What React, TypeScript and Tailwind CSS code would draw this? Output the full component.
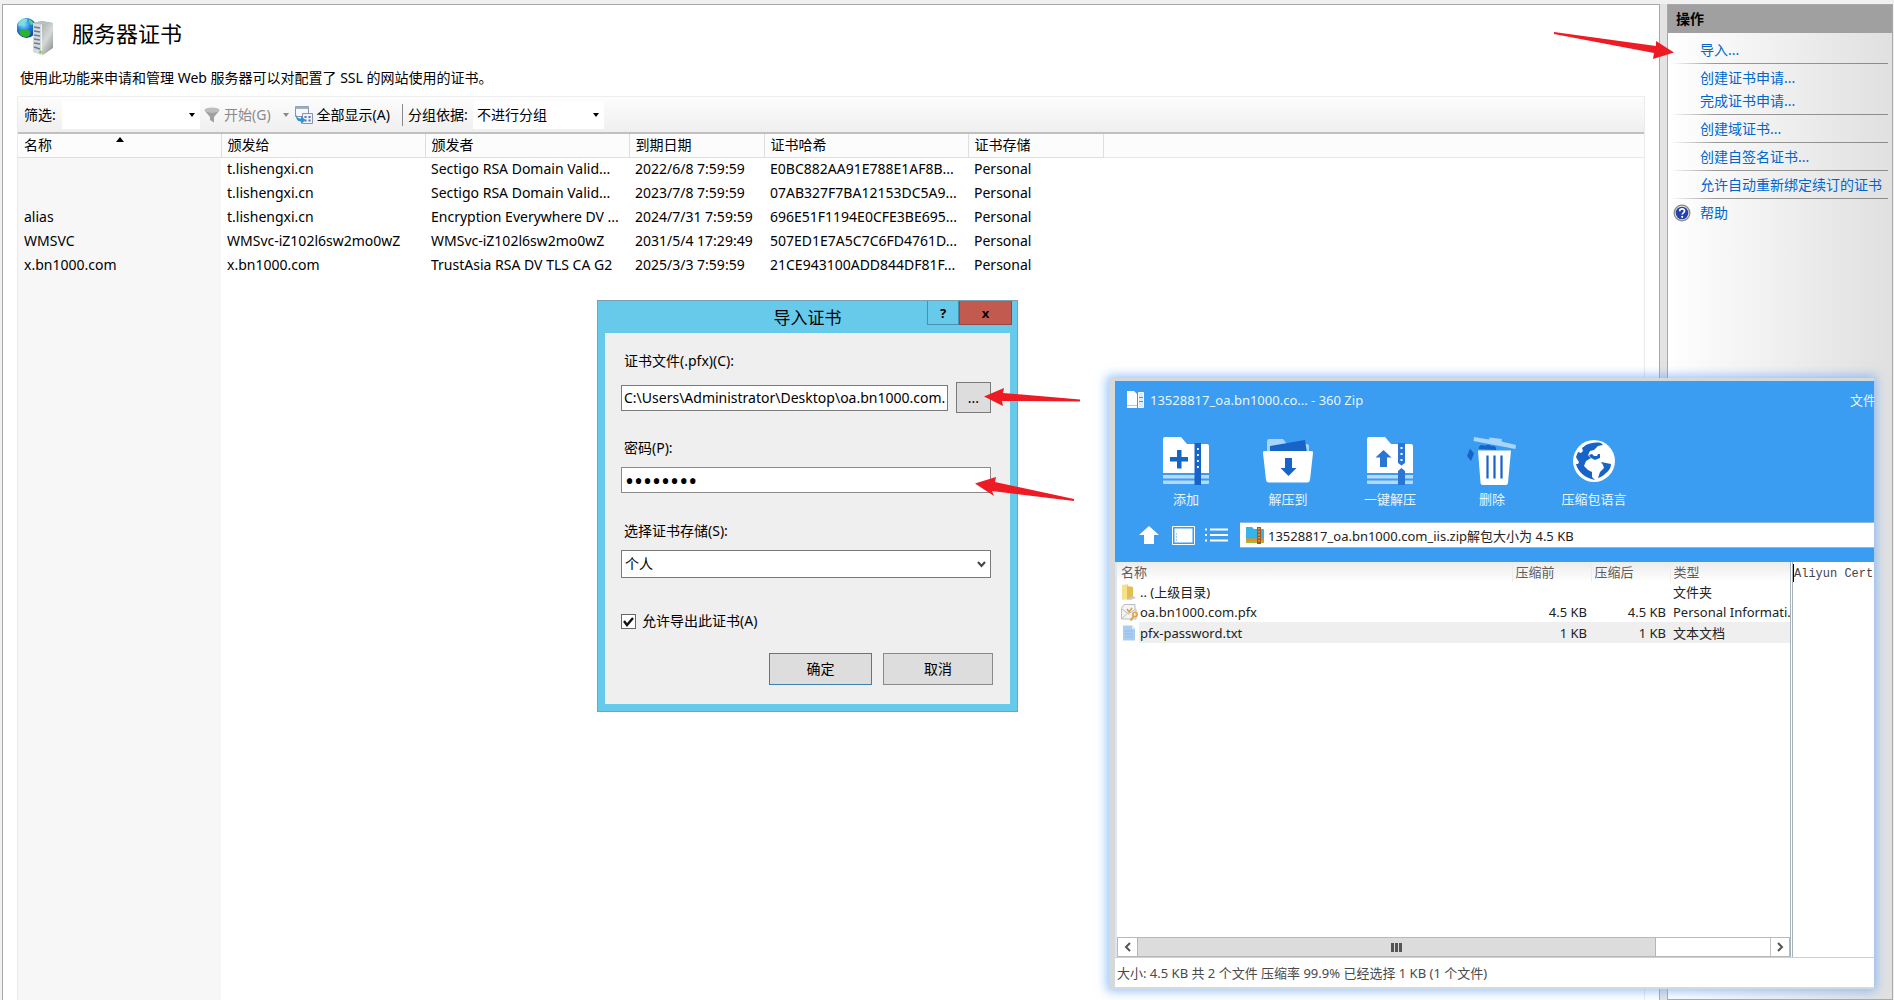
import React from "react";

const certificates = [
  ["", "t.lishengxi.cn", "Sectigo RSA Domain Valid...", "2022/6/8 7:59:59", "E0BC882AA91E788E1AF8B...", "Personal"],
  ["", "t.lishengxi.cn", "Sectigo RSA Domain Valid...", "2023/7/8 7:59:59", "07AB327F7BA12153DC5A9...", "Personal"],
  ["alias", "t.lishengxi.cn", "Encryption Everywhere DV ...", "2024/7/31 7:59:59", "696E51F1194E0CFE3BE695...", "Personal"],
  ["WMSVC", "WMSvc-iZ102l6sw2mo0wZ", "WMSvc-iZ102l6sw2mo0wZ", "2031/5/4 17:29:49", "507ED1E7A5C7C6FD4761D...", "Personal"],
  ["x.bn1000.com", "x.bn1000.com", "TrustAsia RSA DV TLS CA G2", "2025/3/3 7:59:59", "21CE943100ADD844DF81F...", "Personal"],
];

const columns = ["名称", "颁发给", "颁发者", "到期日期", "证书哈希", "证书存储"];

const actionGroups = [
  ["导入..."],
  ["创建证书申请...", "完成证书申请..."],
  ["创建域证书..."],
  ["创建自签名证书..."],
  ["允许自动重新绑定续订的证书"],
];

function ServerIcon() {
  return (
    <svg width="40" height="40" viewBox="0 0 40 40" aria-hidden="true">
      <defs>
        <radialGradient id="globe" cx="0.35" cy="0.3" r="0.8">
          <stop offset="0" stopColor="#8fe6ff" />
          <stop offset="0.45" stopColor="#1f7fe0" />
          <stop offset="1" stopColor="#0a2f9a" />
        </radialGradient>
        <linearGradient id="tower" x1="0" x2="1" y1="0" y2="1">
          <stop offset="0" stopColor="#8d9494" />
          <stop offset="0.6" stopColor="#d5d9d8" />
          <stop offset="1" stopColor="#7d8382" />
        </linearGradient>
      </defs>
      <circle cx="9.500" cy="11" r="10" fill="url(#globe)" />
      <path d="M2 5c2-3 5-4 8-3 1 2-1 3-3 4-1 2-3 3-6 3z" fill="#7be0d0" />
      <path d="M2 14c3-2 6-1 9-1 3 1 3 4 1 6-3 2-7 1-9-2z" fill="#2fb32f" />
      <path d="M12 2c2 1 4 3 5 5l-3 1-2-3z" fill="#5fd27a" />
      <path d="M16 6l9-2 11 2v25l-10 7-10-3z" fill="url(#tower)" />
      <path d="M16 6l8 1v31l-8-3z" fill="#d4dadf" />
      <path d="M17 10l6 1M17 14l6 1M17 18l6 1M17 22l6 1M17 26l6 1M17 30l6 2" stroke="#6a7d8e" strokeWidth="1.600" />
      <path d="M24.500 7v31" stroke="#f2f4f4" strokeWidth="1" />
      <path d="M16 6l9-2 11 2-11 1.500z" fill="#b9c0c2" />
      <circle cx="23.500" cy="35" r="1.500" fill="#6fdc2a" />
    </svg>
  );
}

function Caret({ className = "fill-black" }: { className?: string }) {
  return (
    <svg width="6" height="4" viewBox="0 0 6 4" className={className} aria-hidden="true">
      <path d="M0 0h6L3 4z" />
    </svg>
  );
}

function FunnelIcon() {
  return (
    <svg width="16" height="16" viewBox="0 0 16 16" aria-hidden="true">
      <ellipse cx="8" cy="3" rx="7.500" ry="2.500" fill="#bdbdbd" />
      <path d="M0.500 3.500L6 10v3l4 2.500V10l5.500-6.500C13 6 3 6 .5 3.500z" fill="#a0a0a0" />
    </svg>
  );
}

function ShowAllIcon() {
  return (
    <svg width="18" height="18" viewBox="0 0 18 18" aria-hidden="true">
      <path d="M0.500 .5h13v10H.5z" fill="#f6f9fc" stroke="#8596aa" />
      <path d="M0.500 .5h13v2.500H.5z" fill="#9fb0c4" />
      <path d="M7.500 7.500h10v10h-10z" fill="#eef3f9" stroke="#8596aa" />
      <path d="M9.500 11h2M13.500 11h2M9.500 14.500h2M13.500 14.500h2" stroke="#5b6fc0" strokeWidth="2" />
      <path d="M1 7c0 4 2 5.500 5 5.500V10l4.500 4L6 18v-2.500C2 15.500.5 12 1 7z" fill="#2f93d8" />
    </svg>
  );
}

function HelpIcon() {
  return (
    <svg width="18" height="18" viewBox="0 0 18 18" aria-hidden="true">
      <circle cx="9" cy="9" r="8.500" fill="#8c8c8c" />
      <circle cx="9" cy="9" r="7.200" fill="#e6e6ea" />
      <circle cx="9" cy="9" r="6.300" fill="#2442a8" />
      <path d="M6.700 7.200C6.700 4.200 11.500 4.200 11.500 7c0 1.800-2.300 1.800-2.300 3.600" fill="none" stroke="#fff" strokeWidth="1.700" />
      <circle cx="9.200" cy="12.800" r="1.100" fill="#fff" />
    </svg>
  );
}

function FilterBar() {
  return (
    <div className="flex h-9 items-center border-t border-[#efefef] bg-linear-to-b from-[#fdfdfd] to-[#efefef] pl-[6px]">
      <label htmlFor="filter" className="w-[38px] shrink-0 whitespace-nowrap">筛选:</label>
      <div className="flex h-7 w-[138px] shrink-0 items-center bg-white pr-[5px]">
        <input id="filter" type="text" className="h-full min-w-0 flex-1 bg-transparent outline-none" />
        <button type="button" aria-label="筛选历史"><Caret /></button>
      </div>
      <button type="button" className="ml-1 flex shrink-0 items-center gap-1 text-[#8a8a8a]">
        <FunnelIcon />
        开始(G)
      </button>
      <button type="button" aria-label="开始选项" className="ml-3 shrink-0"><Caret className="fill-[#8a8a8a]" /></button>
      <button type="button" className="ml-[6px] flex shrink-0 items-center gap-1">
        <ShowAllIcon />
        全部显示(A)
      </button>
      <div className="ml-3 h-[22px] w-px shrink-0 bg-[#8a8a8a]" />
      <label htmlFor="group" className="ml-[5px] w-[65px] shrink-0 whitespace-nowrap">分组依据:</label>
      <div className="relative h-7 w-[131px] shrink-0 bg-white">
        <select id="group" className="h-full w-full appearance-none bg-transparent pl-1 outline-none">
          <option>不进行分组</option>
        </select>
        <span className="pointer-events-none absolute inset-y-0 right-[5px] flex items-center"><Caret /></span>
      </div>
    </div>
  );
}

function CertificateTable() {
  return (
    <div className="flex-1 bg-[linear-gradient(to_right,#f7f7f7_203px,#ffffff_203px)]">
      <table className="w-full table-fixed border-collapse text-left">
        <colgroup>
          <col className="w-[203px]" />
          <col className="w-[204px]" />
          <col className="w-[204px]" />
          <col className="w-[135px]" />
          <col className="w-[204px]" />
          <col className="w-[135px]" />
          <col />
        </colgroup>
        <thead>
          <tr className="h-[23px] bg-[#fcfcfc]">
            {columns.map((name, i) => (
              <th key={name} scope="col" className="relative border-r border-b border-[#dedede] pl-[6px] font-normal">
                {name}
                {i === 0 && (
                  <svg width="8" height="5" viewBox="0 0 8 5" className="absolute top-[3px] left-[98px]" aria-hidden="true">
                    <path d="M0 5h8L4 0z" />
                  </svg>
                )}
              </th>
            ))}
            <td className="border-b border-[#e8e8e8]" />
          </tr>
        </thead>
        <tbody>
          {certificates.map((row, r) => (
            <tr key={r} className="h-6">
              {row.map((cell, c) => (
                <td key={c} className="pl-[6px] whitespace-nowrap">{cell}</td>
              ))}
              <td />
            </tr>
          ))}
        </tbody>
      </table>
    </div>
  );
}

function ActionsPanel() {
  return (
    <aside className="w-[226px] shrink-0 border border-[#a9a9a9] bg-linear-to-r from-white to-[#e0e0e0]">
      <h2 className="flex h-7 items-center bg-[#a0a0a0] pl-2 font-bold">操作</h2>
      <nav className="pt-[3px] pr-1 pl-[3px]">
        {actionGroups.map((group) => (
          <div key={group[0]}>
            <ul className="py-[2px] pl-[29px]">
              {group.map((item) => (
                <li key={item} className="h-[23px] leading-[23px] whitespace-nowrap">
                  <a href="#" className="text-[#0066cc]">{item}</a>
                </li>
              ))}
            </ul>
            <div className="h-px bg-linear-to-r from-transparent via-[#9a9a9a] via-20% to-[#8c8c8c]" />
          </div>
        ))}
        <a href="#" className="flex items-center gap-[9px] pt-1 pl-[2px] text-[#0066cc]">
          <HelpIcon />
          帮助
        </a>
      </nav>
    </aside>
  );
}

function ImportDialog() {
  return (
    <section role="dialog" aria-labelledby="dialog-title" className="absolute top-[300px] left-[597px] w-[421px] border border-[#7ba0ae] bg-[#67caeb] px-[7px] pb-[7px]">
      <header className="relative flex h-8 items-center justify-center pt-0.5">
        <h2 id="dialog-title" className="text-[17px]">导入证书</h2>
        <div className="absolute top-0 -right-0.5 flex h-6 text-[13px] font-bold">
          <button type="button" aria-label="帮助" className="w-8 border border-t-0 border-[#4792ad]">?</button>
          <button type="button" aria-label="关闭" className="w-[53px] border border-t-0 border-[#96473f] bg-[#c25a50]">x</button>
        </div>
      </header>
      <form className="flex h-[371px] flex-col bg-[#efefef] pt-[18px] pr-[19px] pl-4" onSubmit={(e) => e.preventDefault()}>
        <label htmlFor="pfx" className="pl-[3px]">证书文件(.pfx)(C):</label>
        <div className="mt-[11px] flex items-center gap-2">
          <input id="pfx" type="text" defaultValue="C:\Users\Administrator\Desktop\oa.bn1000.com." className="h-[26px] w-[327px] border border-[#7a7a7a] bg-white pl-[2px] outline-none" />
          <button type="button" aria-label="浏览" className="h-[31px] flex-1 border border-[#7a7a7a] bg-[#dddddd]">...</button>
        </div>
        <label htmlFor="password" className="mt-[25px] pl-[3px]">密码(P):</label>
        <input id="password" type="password" defaultValue="password" className="mt-[9px] h-[26px] w-full border border-[#8a8a8a] bg-white px-[3px] text-[24px] outline-none" />
        <label htmlFor="store" className="mt-[28px] pl-[3px]">选择证书存储(S):</label>
        <div className="relative mt-[9px]">
          <select id="store" className="h-7 w-full appearance-none border border-[#7a7a7a] bg-white pl-[3px] outline-none">
            <option>个人</option>
          </select>
          <svg width="9" height="7" viewBox="0 0 9 7" className="pointer-events-none absolute top-[11px] right-[5px]" aria-hidden="true">
            <path d="M1 1l3.500 4L8 1" fill="none" stroke="#444" strokeWidth="2" />
          </svg>
        </div>
        <label className="mt-[33px] flex items-center gap-[6px]">
          <span className="relative flex">
            <input type="checkbox" defaultChecked className="peer h-[15px] w-[15px] appearance-none border border-[#666] bg-white" />
            <svg width="15" height="15" viewBox="0 0 15 15" className="pointer-events-none absolute inset-0 hidden peer-checked:block" aria-hidden="true">
              <path d="M3 7l3 4 6-7" fill="none" stroke="#111" strokeWidth="2.400" />
            </svg>
          </span>
          允许导出此证书(A)
        </label>
        <div className="mt-[22px] -mr-[2px] flex justify-end gap-[11px]">
          <button type="submit" className="h-8 w-[103px] border border-[#3c7fb1] bg-[#dddddd]">确定</button>
          <button type="button" className="h-8 w-[110px] border border-[#8a8a8a] bg-[#dddddd]">取消</button>
        </div>
      </form>
    </section>
  );
}

function AddIcon() {
  return (
    <svg width="46" height="48" viewBox="0 0 46 48" aria-hidden="true">
      <path d="M0 2a2 2 0 0 1 2-2h16l6 7h20a2 2 0 0 1 2 2v27H0z" fill="#fff" />
      <path d="M0 38h46v3.500H0zM0 43.500h46V46a1 1 0 0 1-1 1H1a1 1 0 0 1-1-1z" fill="#b3dbfd" />
      <path d="M31.500 6H38v42h-6.500z" fill="#1763c8" />
      <path d="M34 11h1.800v2H34zM34 17h1.800v2H34zM34 23h1.800v2H34zM34 29h1.800v2H34z" fill="#fff" />
      <path d="M14 13h4.500v7H25v4.500h-6.500v7H14v-7H7V20h7z" fill="#1763c8" />
    </svg>
  );
}

function ExtractIcon() {
  return (
    <svg width="50" height="46" viewBox="0 0 50 46" aria-hidden="true">
      <path d="M4 3a2 2 0 0 1 2-2h14l4 5h20a2 2 0 0 1 2 2v7H4z" fill="#a9d5fc" />
      <path d="M7 8l35-6 2 13H7z" fill="#1763c8" />
      <path d="M1.500 13h47a1.500 1.500 0 0 1 1.500 2l-3 27a3 3 0 0 1-3 2.500H6A3 3 0 0 1 3 42L0 15a1.500 1.500 0 0 1 1.500-2z" fill="#fff" />
      <path d="M22 20h7v10h4.500L25.500 38 17.500 30H22z" fill="#1763c8" />
    </svg>
  );
}

function OneClickIcon() {
  return (
    <svg width="46" height="48" viewBox="0 0 46 48" aria-hidden="true">
      <path d="M0 2a2 2 0 0 1 2-2h16l6 7h20a2 2 0 0 1 2 2v27H0z" fill="#fff" />
      <path d="M0 38h46v3.500H0zM0 43.500h46V46a1 1 0 0 1-1 1H1a1 1 0 0 1-1-1z" fill="#b3dbfd" />
      <path d="M31 6h7v20l-3.500 2.500L31 26zM31 34l3.500-3 3.500 3v14h-7z" fill="#2a76d2" />
      <path d="M33.500 10h2v2h-2zM33.500 16h2v2h-2zM33.500 22h2v2h-2z" fill="#fff" />
      <path d="M13 30V20.500H8.500L16.500 13l8 7.500H20V30z" fill="#2a76d2" />
    </svg>
  );
}

function TrashIcon() {
  return (
    <svg width="50" height="48" viewBox="0 0 50 48" aria-hidden="true">
      <path d="M7 0l15 2.500.5-2L35 2l-.5 2.500L49 8l-.5 4L6.500 4z" fill="#a9d5fc" />
      <path d="M12 12c-1-4 4-5 6-3 2-2 5-1 6 0 3-1 6 1 5 4z" fill="#1763c8" />
      <path d="M3 11.500l4 5-3 7.500-4-5z" fill="#1763c8" />
      <path d="M11 13.500h33l-3 32a2.500 2.500 0 0 1-2.500 2.500H16a2.500 2.500 0 0 1-2.500-2.500z" fill="#fff" />
      <path d="M20.500 18.500v23M27.500 18.500v23M34.500 18.500v23" stroke="#1763c8" strokeWidth="2.200" />
    </svg>
  );
}

function LanguageIcon() {
  return (
    <svg width="42" height="42" viewBox="0 0 42 42" aria-hidden="true">
      <circle cx="21" cy="21" r="21" fill="#fff" />
      <path d="M13 5c4-2 10-3 15-2l2 2-5 1-4 4-4 1-2 4 3 3-5 3-2 5 4 4 4 2v5l3 3C12 38 5 32 3 24l2 0 1-2-2-3-1-2 2-5 3 1 2-2-1-3z" fill="#1763c8" />
      <path d="M16 15l3-1 2 2 3 0 1-2 2 0v4l-5 2-4-2z" fill="#1763c8" />
      <path d="M28 22l5 1 5 1c0 3-2 7-5 9-3 3-5 4-8 5l2-6 4-4-1-3z" fill="#1763c8" />
    </svg>
  );
}

const zipTools = [
  { label: "添加", icon: <AddIcon /> },
  { label: "解压到", icon: <ExtractIcon /> },
  { label: "一键解压", icon: <OneClickIcon /> },
  { label: "删除", icon: <TrashIcon /> },
  { label: "压缩包语言", icon: <LanguageIcon /> },
];

function ZipTitleIcon() {
  return (
    <svg width="17" height="18" viewBox="0 0 17 18" aria-hidden="true">
      <path d="M0 0h7l3 3v14H0z" fill="#fff" />
      <path d="M0 14.500h10" stroke="#9ccdf9" />
      <path d="M11.500 1.500h5v15h-5z" fill="#d7ebfd" stroke="#fff" />
      <path d="M12 6.500h4M12 10.500h4" stroke="#3a9df2" />
    </svg>
  );
}

function ArchiveIcon() {
  return (
    <svg width="18" height="18" viewBox="0 0 18 18" aria-hidden="true">
      <path d="M0 1h6l2 2h9a1 1 0 0 1 1 1v9H0z" fill="#38b3ea" />
      <path d="M0 12.500h18V15H0z" fill="#f08a1d" />
      <path d="M0 15h18v2H0z" fill="#8cc63f" />
      <path d="M11 1h4v17h-4z" fill="#a4561b" />
      <path d="M13 2v15" stroke="#f3c27a" strokeWidth="1.200" strokeDasharray="1.500 1.500" />
    </svg>
  );
}

function FolderIcon() {
  return (
    <svg width="16" height="17" viewBox="0 0 16 17" aria-hidden="true">
      <path d="M1 1l6-1v15l-6 1z" fill="#f7e08a" />
      <path d="M6 2l6 1v11l-6 2z" fill="#e3bd4e" />
      <path d="M12 12l3 2-6 2-3-1z" fill="#c9c9c9" />
    </svg>
  );
}

function PfxIcon() {
  return (
    <svg width="17" height="18" viewBox="0 0 17 18" aria-hidden="true">
      <path d="M0.500 5.500L3 1.500h11v4l1 1v9.500H.5z" fill="#f4f4f4" stroke="#bdbdbd" />
      <path d="M1 6l6.500 5L14.500 6M1 15.500l5-5" fill="none" stroke="#b8b8b8" />
      <path d="M6 6l2 3 3-4" fill="none" stroke="#d9a23a" strokeWidth="1.500" />
      <circle cx="14" cy="11.500" r="2.200" fill="none" stroke="#e2a04a" strokeWidth="1.600" />
      <path d="M12.500 13.500L9.500 17.500" stroke="#e2a04a" strokeWidth="2" />
    </svg>
  );
}

function TextFileIcon() {
  return (
    <svg width="15" height="17" viewBox="0 0 15 17" aria-hidden="true">
      <path d="M2 1.500h9l3 3v12H2z" fill="#a9cdf0" />
      <path d="M11 1l3.500 4H11z" fill="#dcebf8" />
      <path d="M4 7h8M4 10h8M4 13h8" stroke="#93bfea" />
    </svg>
  );
}

const zipRows = [
  { name: ".. (上级目录)", before: "", after: "", type: "文件夹", icon: <FolderIcon />, selected: false },
  { name: "oa.bn1000.com.pfx", before: "4.5 KB", after: "4.5 KB", type: "Personal Informati.", icon: <PfxIcon />, selected: false },
  { name: "pfx-password.txt", before: "1 KB", after: "1 KB", type: "文本文档", icon: <TextFileIcon />, selected: true },
];

function ZipWindow() {
  return (
    <section aria-label="360 Zip" className="absolute top-[378px] right-[20px] bottom-[11px] left-[1109px] flex flex-col border-t-[3px] border-b-2 border-l-[6px] border-[#d6d9dc] bg-white text-[13px] shadow-[0_0_10px_2px_rgba(96,165,250,0.7)]">
      <header className="flex h-[181px] shrink-0 flex-col bg-[#3a9df2] text-[#e9f5ff]">
        <div className="flex h-[38px] items-center pl-3">
          <ZipTitleIcon />
          <h2 className="ml-[6px] flex-1 text-[13px]">13528817_oa.bn1000.co... - 360 Zip</h2>
          <button type="button" className="w-6 overflow-hidden text-left whitespace-nowrap">文件</button>
        </div>
        <div className="flex pt-[18px] pl-5">
          {zipTools.map((tool) => (
            <button key={tool.label} type="button" className="flex h-[73px] w-[102px] flex-col items-center justify-between">
              <span className="flex h-12 items-center">{tool.icon}</span>
              <span className="leading-[22px]">{tool.label}</span>
            </button>
          ))}
        </div>
        <div className="mt-3 flex h-[26px] items-center pl-6">
          <button type="button" aria-label="向上">
            <svg width="20" height="18" viewBox="0 0 20 18" aria-hidden="true"><path d="M10 0l10 9h-5v9H5V9H0z" fill="#fff" /></svg>
          </button>
          <button type="button" aria-label="预览" className="ml-[13px]">
            <svg width="23" height="19" viewBox="0 0 23 19" aria-hidden="true">
              <path d="M0.500 .5h22v18H.5z" fill="none" stroke="#fff" />
              <path d="M2.500 2.500h18v14h-18z" fill="#fff" />
              <path d="M4 8h1M4 11h1M4 14h1" stroke="#3a9df2" />
            </svg>
          </button>
          <button type="button" aria-label="列表" className="ml-[10px]">
            <svg width="23" height="14" viewBox="0 0 23 14" aria-hidden="true">
              <path d="M0 1.500h2M5 1.500h18M0 7h2M5 7h18M0 12.500h2M5 12.500h18" stroke="#fff" strokeWidth="2" />
            </svg>
          </button>
          <label className="ml-3 flex h-full flex-1 items-center border-y border-[#8fb8dd] bg-white pl-[6px] text-[#222]">
            <ArchiveIcon />
            <input type="text" aria-label="路径" defaultValue="13528817_oa.bn1000.com_iis.zip解包大小为 4.5 KB" className="ml-1 h-full min-w-0 flex-1 bg-transparent outline-none" />
          </label>
        </div>
      </header>

      <div className="flex min-h-0 flex-1">
        <div className="flex min-w-0 flex-1 flex-col border-l-2 border-[#dfe6ec]">
          <div className="flex-1 overflow-hidden">
            <table className="w-full table-fixed border-collapse text-left">
              <colgroup>
                <col />
                <col className="w-[79px]" />
                <col className="w-[79px]" />
                <col className="w-[120px]" />
              </colgroup>
              <thead>
                <tr className="h-5 bg-linear-to-b from-[#ececec] to-white text-[#5c5c5c]">
                  <th scope="col" className="pl-1 font-normal">名称</th>
                  <th scope="col" className="border-l border-[#ececec] pl-[3px] font-normal">压缩前</th>
                  <th scope="col" className="border-l border-[#ececec] pl-[3px] font-normal">压缩后</th>
                  <th scope="col" className="border-l border-[#ececec] pl-[3px] font-normal">类型</th>
                </tr>
              </thead>
              <tbody className="text-[#222]">
                {zipRows.map((row) => (
                  <tr key={row.name} className={row.selected ? "h-[21px] bg-[linear-gradient(to_right,#fff_22px,#efefef_22px)]" : "h-5"}>
                    <td className="p-0">
                      <div className="flex items-center pl-1">
                        <span className="w-[19px] shrink-0">{row.icon}</span>
                        <span className="leading-5 whitespace-nowrap">{row.name}</span>
                      </div>
                    </td>
                    <td className="pr-1 text-right">{row.before}</td>
                    <td className="pr-1 text-right">{row.after}</td>
                    <td className="pl-[3px] whitespace-nowrap">{row.type}</td>
                  </tr>
                ))}
              </tbody>
            </table>
          </div>
          <div className="flex h-5 shrink-0 border border-[#b9b9b9] bg-white">
            <button type="button" aria-label="向左滚动" className="flex w-[19px] items-center justify-center">
              <svg width="7" height="10" viewBox="0 0 7 10" aria-hidden="true"><path d="M6 1L2 5l4 4" fill="none" stroke="#555" strokeWidth="2" /></svg>
            </button>
            <div className="flex flex-1">
              <div className="flex w-[82%] items-center justify-center border-x border-[#b5b5b5] bg-[#dcdcdc]">
                <svg width="11" height="9" viewBox="0 0 11 9" aria-hidden="true"><path d="M1.500 0v9M5.500 0v9M9.500 0v9" stroke="#555" strokeWidth="3" /></svg>
              </div>
            </div>
            <button type="button" aria-label="向右滚动" className="flex w-[19px] items-center justify-center border-l border-[#c5c5c5]">
              <svg width="7" height="10" viewBox="0 0 7 10" aria-hidden="true"><path d="M1 1l4 4-4 4" fill="none" stroke="#555" strokeWidth="2" /></svg>
            </button>
          </div>
        </div>
        <div className="flex w-[84px] shrink-0 items-start border-l-[3px] border-double border-[#a9b2bb] pt-[2px] font-['Liberation_Mono',monospace] text-[12px] leading-5 text-[#444]">
          <span className="h-[18px] w-px bg-black" />
          <pre className="font-[inherit]">Aliyun Cert</pre>
        </div>
      </div>
      <footer className="flex h-[30px] shrink-0 items-center border-t border-[#cfcfcf] pl-[2px] text-[#4a4a4a]">
        大小: 4.5 KB 共 2 个文件 压缩率 99.9% 已经选择 1 KB (1 个文件)
      </footer>
    </section>
  );
}

function Arrows() {
  return (
    <>
      <svg width="120" height="28" viewBox="0 0 120 28" className="absolute top-[32px] left-[1554px]" aria-hidden="true">
        <path d="M0 0L102 14 102 9 120 20.500 99 27 100 21 0 2z" fill="#ed1c24" />
      </svg>
      <svg width="98" height="20" viewBox="0 0 98 20" className="absolute top-[387px] left-[984px]" aria-hidden="true">
        <path d="M0 9.500L20 1 19 6 96 12.500v2L18 14l1 5z" fill="#ed1c24" />
      </svg>
      <svg width="100" height="26" viewBox="0 0 100 26" className="absolute top-[476px] left-[975px]" aria-hidden="true">
        <path d="M0 7.500L21 1 20 6 99 23v2L17 15l2 5z" fill="#ed1c24" />
      </svg>
    </>
  );
}

export default function App() {
  return (
    <div className="relative flex h-screen overflow-hidden bg-[#f0f0f0] pt-1 pr-px pl-[2px] font-['Noto_Sans','Noto_Sans_CJK_SC',sans-serif] text-[14px] leading-5 text-black">
      <main className="flex min-w-0 flex-1 flex-col border border-b-0 border-[#a9a9a9] bg-white px-[14px]">
        <header className="flex h-14 items-start pt-3">
          <ServerIcon />
          <h1 className="ml-[15px] text-[22px] leading-8">服务器证书</h1>
        </header>
        <p className="mt-[7px] mb-2 pl-[3px] leading-5">使用此功能来申请和管理 Web 服务器可以对配置了 SSL 的网站使用的证书。</p>
        <div className="flex flex-1 flex-col border-x border-[#ebebeb]">
          <FilterBar />
          <div className="h-[2px] bg-[#c0c0c0]" />
          <CertificateTable />
        </div>
      </main>
      <div className="w-[7px] shrink-0 bg-[#e3e3e3]" />
      <ActionsPanel />
      <ImportDialog />
      <ZipWindow />
      <Arrows />
    </div>
  );
}
